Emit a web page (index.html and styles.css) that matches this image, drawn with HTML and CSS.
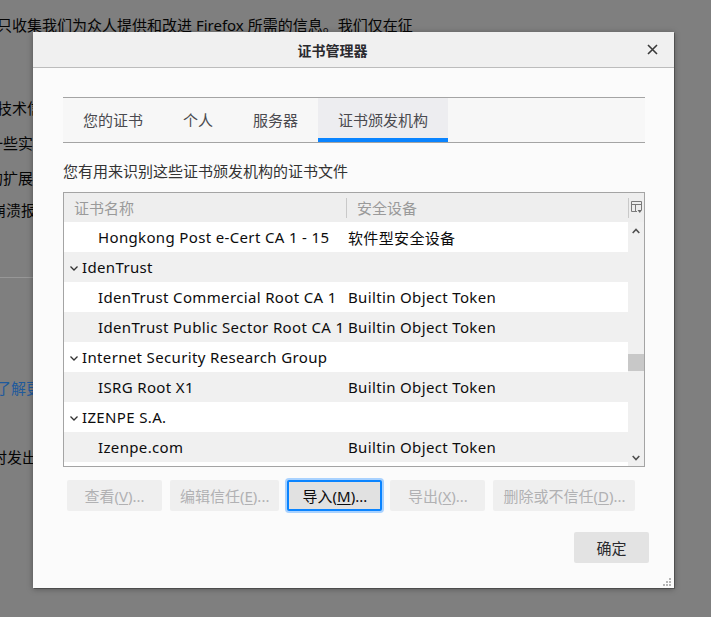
FILE: index.html
```html
<!DOCTYPE html>
<html lang="zh-CN">
<head>
<meta charset="utf-8">
<title>证书管理器</title>
<link rel="stylesheet" href="styles.css">
</head>
<body>
<div class="page">
  <p class="bg l1">只收集我们为众人提供和改进 Firefox 所需的信息。我们仅在征</p>
  <p class="bg l2">技术信息</p>
  <p class="bg l3">一些实用</p>
  <p class="bg l4">的扩展</p>
  <p class="bg l5">崩溃报告</p>
  <div class="bg-rule"></div>
  <p class="bg l6">了解更多</p>
  <p class="bg l7">时发出</p>
</div>

<div class="dialog">
  <div class="titlebar">
    <div class="title">证书管理器</div>
    <div class="close">
      <svg width="11" height="11" viewBox="0 0 11 11"><path d="M1 1 L10 10 M10 1 L1 10" stroke="#3a3a3a" stroke-width="1.6" fill="none"/></svg>
    </div>
  </div>
  <div class="content">
    <div class="tabs">
      <div class="tab">您的证书</div>
      <div class="tab">个人</div>
      <div class="tab">服务器</div>
      <div class="tab active">证书颁发机构</div>
    </div>
    <p class="desc">您有用来识别这些证书颁发机构的证书文件</p>
    <div class="tree">
      <div class="tree-head">
        <div class="th th1">证书名称</div>
        <div class="th th2">安全设备</div>
        <div class="picker">
          <svg width="11" height="13" viewBox="0 0 11 13"><path d="M0.5 0.5 H10.5 V9 M0.5 0.5 V10.5 H6 M0.5 3.5 H10.5 M4.5 3.5 V10.5" stroke="#7a7a7a" stroke-width="1" fill="none"/><path d="M6.5 9 H11 L8.75 12 Z" fill="#6a6a6a"/></svg>
        </div>
      </div>
      <div class="tree-body">
        <div class="rows">
          <div class="row child"><span class="c1">Hongkong Post e-Cert CA 1 - 15</span><span class="c2">软件型安全设备</span></div>
          <div class="row parent alt"><span class="c1"><svg class="twisty" width="8" height="5" viewBox="0 0 8 5"><path d="M0.5 0.5 L4 4 L7.5 0.5" stroke="#333" stroke-width="1.3" fill="none"/></svg>IdenTrust</span><span class="c2"></span></div>
          <div class="row child"><span class="c1">IdenTrust Commercial Root CA 1</span><span class="c2">Builtin Object Token</span></div>
          <div class="row child alt"><span class="c1">IdenTrust Public Sector Root CA 1</span><span class="c2">Builtin Object Token</span></div>
          <div class="row parent"><span class="c1"><svg class="twisty" width="8" height="5" viewBox="0 0 8 5"><path d="M0.5 0.5 L4 4 L7.5 0.5" stroke="#333" stroke-width="1.3" fill="none"/></svg>Internet Security Research Group</span><span class="c2"></span></div>
          <div class="row child alt"><span class="c1">ISRG Root X1</span><span class="c2">Builtin Object Token</span></div>
          <div class="row parent"><span class="c1"><svg class="twisty" width="8" height="5" viewBox="0 0 8 5"><path d="M0.5 0.5 L4 4 L7.5 0.5" stroke="#333" stroke-width="1.3" fill="none"/></svg>IZENPE S.A.</span><span class="c2"></span></div>
          <div class="row child alt"><span class="c1">Izenpe.com</span><span class="c2">Builtin Object Token</span></div>
          <div class="row child"><span class="c1"></span><span class="c2"></span></div>
        </div>
        <div class="scrollbar">
          <div class="sb-arrow">
            <svg width="8" height="6" viewBox="0 0 8 6"><path d="M0.7 5 L4 1.5 L7.3 5" stroke="#505050" stroke-width="1.6" fill="none"/></svg>
          </div>
          <div class="sb-track"><div class="sb-thumb"></div></div>
          <div class="sb-arrow">
            <svg width="8" height="6" viewBox="0 0 8 6"><path d="M0.7 1 L4 4.5 L7.3 1" stroke="#505050" stroke-width="1.6" fill="none"/></svg>
          </div>
        </div>
      </div>
    </div>
    <div class="actions">
      <button class="btn" disabled>查看(<u>V</u>)...</button>
      <button class="btn" disabled>编辑信任(<u>E</u>)...</button>
      <button class="btn focused">导入(<u>M</u>)...</button>
      <button class="btn" disabled>导出(<u>X</u>)...</button>
      <button class="btn" disabled>删除或不信任(<u>D</u>)...</button>
    </div>
    <div class="footer">
      <button class="btn ok">确定</button>
    </div>
  </div>
  <div class="grip">
    <svg width="9" height="9" viewBox="0 0 9 9" fill="#b5b5b5">
      <rect x="6" y="0" width="2" height="2"/>
      <rect x="3" y="3" width="2" height="2"/><rect x="6" y="3" width="2" height="2"/>
      <rect x="0" y="6" width="2" height="2"/><rect x="3" y="6" width="2" height="2"/><rect x="6" y="6" width="2" height="2"/>
    </svg>
  </div>
</div>
</body>
</html>
```

FILE: styles.css
```css
* { box-sizing: border-box; }

html, body {
  margin: 0;
  padding: 0;
}

body {
  width: 711px;
  height: 617px;
  overflow: hidden;
  background: #7f7f7f;
  font-family: "Noto Sans", "Noto Sans CJK SC", sans-serif;
  font-size: 15px;
  color: #0c0c0d;
  position: relative;
}

/* background page (dimmed by modal) */
.page {
  padding-top: 15px;
}

.bg {
  margin: 0;
  height: 20px;
  line-height: 20px;
  font-size: 15px;
  color: #050505;
  white-space: nowrap;
  margin-left: -3px;
}

.l2 { margin-top: 63px; }
.l3 { margin-top: 15px; margin-left: -12px; }
.l4 { margin-top: 15px; margin-left: -12px; }
.l5 { margin-top: 12px; margin-left: -9px; }
.bg-rule {
  margin-top: 57px;
  width: 34px;
  height: 1px;
  background: #979797;
}
.l6 { margin-top: 100px; margin-left: -4px; color: #1f5a9c; }
.l7 { margin-top: 49px; margin-left: -8px; }

/* dialog */
.dialog {
  position: absolute;
  left: 33px;
  top: 32px;
  width: 641px;
  height: 556px;
  background: #fbfbfb;
  box-shadow: 1px 1px 0 rgba(0,0,0,0.25), 0 1px 6px rgba(0,0,0,0.35);
  display: flex;
  flex-direction: column;
}

.titlebar {
  height: 36px;
  background: #f0f0f0;
  border-bottom: 1px solid #bcbcbc;
  display: flex;
  align-items: center;
}

.title {
  flex: 1;
  text-align: center;
  font-size: 14px;
  font-weight: bold;
  color: #2a2a2e;
  padding-left: 2px;
}

.close {
  width: 44px;
  display: flex;
  justify-content: center;
  align-items: center;
}

.content {
  padding: 29px 29px 0 30px;
  flex: 1;
  display: flex;
  flex-direction: column;
}

.tabs {
  display: flex;
  border-top: 1px solid #a4a4a4;
  border-bottom: 1px solid #a4a4a4;
  background: #f7f7f7;
  height: 46px;
}

.tab {
  padding: 0 20px;
  line-height: 44px;
  color: #4a4a4f;
  font-size: 15px;
}

.tab.active {
  background: #ededf0;
  border-bottom: 4px solid #0a84ff;
}

.desc {
  margin: 18px 0 0 0;
  line-height: 20px;
  color: #333;
}

.tree {
  margin-top: 11px;
  border: 1px solid #a4a4a4;
  height: 275px;
  display: flex;
  flex-direction: column;
  background: #fff;
}

.tree-head {
  height: 29px;
  background: #eeeeee;
  display: flex;
  align-items: center;
  color: #9a9a9a;
}

.th1 {
  width: 282px;
  padding-left: 10px;
}

.th2 {
  flex: 1;
  border-left: 1px solid #c9c9c9;
  padding-left: 10px;
  line-height: 20px;
}

.picker {
  width: 16px;
  height: 20px;
  border-left: 1px solid #c9c9c9;
  display: flex;
  align-items: center;
  justify-content: flex-end;
  padding-right: 2px;
}

.tree-body {
  flex: 1;
  display: flex;
  overflow: hidden;
}

.rows {
  flex: 1;
  overflow: hidden;
}

.row {
  height: 30px;
  display: grid;
  grid-template-columns: 282px 1fr;
  align-items: center;
  white-space: nowrap;
  background: #fff;
  letter-spacing: 0.35px;
}

.row.alt { background: #f0f0f0; }

.row .c1 {
  display: flex;
  align-items: center;
  overflow: hidden;
}

.row.child .c1 { padding-left: 34px; }
.row.parent .c1 { padding-left: 6px; }

.twisty {
  margin-right: 4px;
  margin-top: 2px;
}

.row .c2 { padding-left: 2px; }

.scrollbar {
  width: 16px;
  background: #f0f0f0;
  display: flex;
  flex-direction: column;
}

.sb-arrow {
  height: 17px;
  display: flex;
  align-items: center;
  justify-content: center;
}

.sb-track { flex: 1; }

.sb-thumb {
  margin-top: 115px;
  height: 17px;
  background: #c8c8c8;
}

.actions {
  display: flex;
  gap: 8px;
  padding: 0 4px;
  margin-top: 13px;
}

.btn {
  font-family: inherit;
  font-size: 15px;
  height: 31px;
  min-width: 95px;
  padding: 0 10px;
  border: none;
  border-radius: 2px;
  background: #efefef;
  color: #0c0c0d;
}

.btn u { text-underline-offset: 2px; }

.btn:disabled { color: #b1b1b3; }

.btn.focused {
  background: #e1e1e1;
  box-shadow: inset 0 0 0 2px #0a84ff, 0 0 0 2px #a9d2ff;
}

.footer {
  display: flex;
  justify-content: flex-end;
  margin-top: 21px;
  margin-right: -4px;
}

.btn.ok {
  min-width: 75px;
  width: 75px;
  background: #e3e3e3;
  color: #2a2a2e;
}

.grip {
  position: absolute;
  right: 2px;
  bottom: 1px;
  line-height: 0;
}
```
